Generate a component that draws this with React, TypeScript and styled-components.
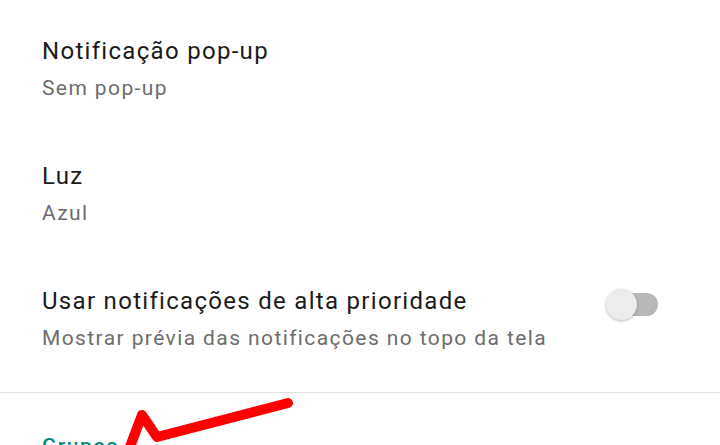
import React from "react";
import styled, { createGlobalStyle } from "styled-components";

const Global = createGlobalStyle`
  html, body { margin: 0; padding: 0; background: #ffffff; overflow: hidden; }
  body { font-family: Roboto, "Noto Sans", "Liberation Sans", sans-serif; }
`;

const Page = styled.div`
  position: relative;
  width: 720px;
  height: 445px;
  overflow: hidden;
  background: #ffffff;
`;

const List = styled.div`
  display: flex;
  flex-direction: column;
`;

const Row = styled.div<{ $h: number }>`
  display: flex;
  align-items: flex-start;
  justify-content: space-between;
  box-sizing: border-box;
  height: ${(p) => p.$h}px;
  padding: 36px 62px 0 42px;
`;

const Texts = styled.div`
  display: flex;
  flex-direction: column;
`;

const Title = styled.div`
  font-size: 24px;
  line-height: 30px;
  letter-spacing: 1.3px;
  color: #1b1b1b;
  white-space: nowrap;
`;

const Sub = styled.div`
  margin-top: 9px;
  font-size: 21px;
  line-height: 26px;
  letter-spacing: 1.4px;
  color: #6d6d6d;
  white-space: nowrap;
`;

const Divider = styled.div`
  height: 1px;
  background: #e2e2e2;
`;

const SectionHeader = styled.div`
  padding: 41px 0 0 42px;
  font-size: 21px;
  line-height: 24px;
  font-weight: 500;
  letter-spacing: 1.5px;
  color: #00897b;
`;

const Switch = styled.div`
  position: relative;
  width: 52px;
  height: 31px;
  margin-top: 3px;
  display: flex;
  align-items: center;
`;

const Track = styled.div`
  margin-left: 10px;
  width: 42px;
  height: 23px;
  border-radius: 12px;
  background: #b8b8b8;
`;

const Thumb = styled.div`
  position: absolute;
  left: 0;
  top: 0;
  width: 31px;
  height: 31px;
  border-radius: 50%;
  background: #ececec;
  box-shadow: 0 1px 3px rgba(0, 0, 0, 0.28);
`;

const Arrow = styled.svg`
  position: absolute;
  left: 0;
  top: 0;
  pointer-events: none;
`;

export default function App() {
  return (
    <Page>
      <Global />
      <List>
        <Row $h={125}>
          <Texts>
            <Title>Notificação pop-up</Title>
            <Sub>Sem pop-up</Sub>
          </Texts>
        </Row>
        <Row $h={125}>
          <Texts>
            <Title>Luz</Title>
            <Sub>Azul</Sub>
          </Texts>
        </Row>
        <Row $h={142}>
          <Texts>
            <Title>Usar notificações de alta prioridade</Title>
            <Sub>Mostrar prévia das notificações no topo da tela</Sub>
          </Texts>
          <Switch>
            <Track />
            <Thumb />
          </Switch>
        </Row>
        <Divider />
        <SectionHeader>Grupos</SectionHeader>
      </List>
      <Arrow width="720" height="445" viewBox="0 0 720 445">
        <polyline
          points="288,403 157,437 142,415 128,452"
          fill="none"
          stroke="#ff0000"
          strokeWidth="10"
          strokeLinecap="round"
          strokeLinejoin="round"
        />
      </Arrow>
    </Page>
  );
}
